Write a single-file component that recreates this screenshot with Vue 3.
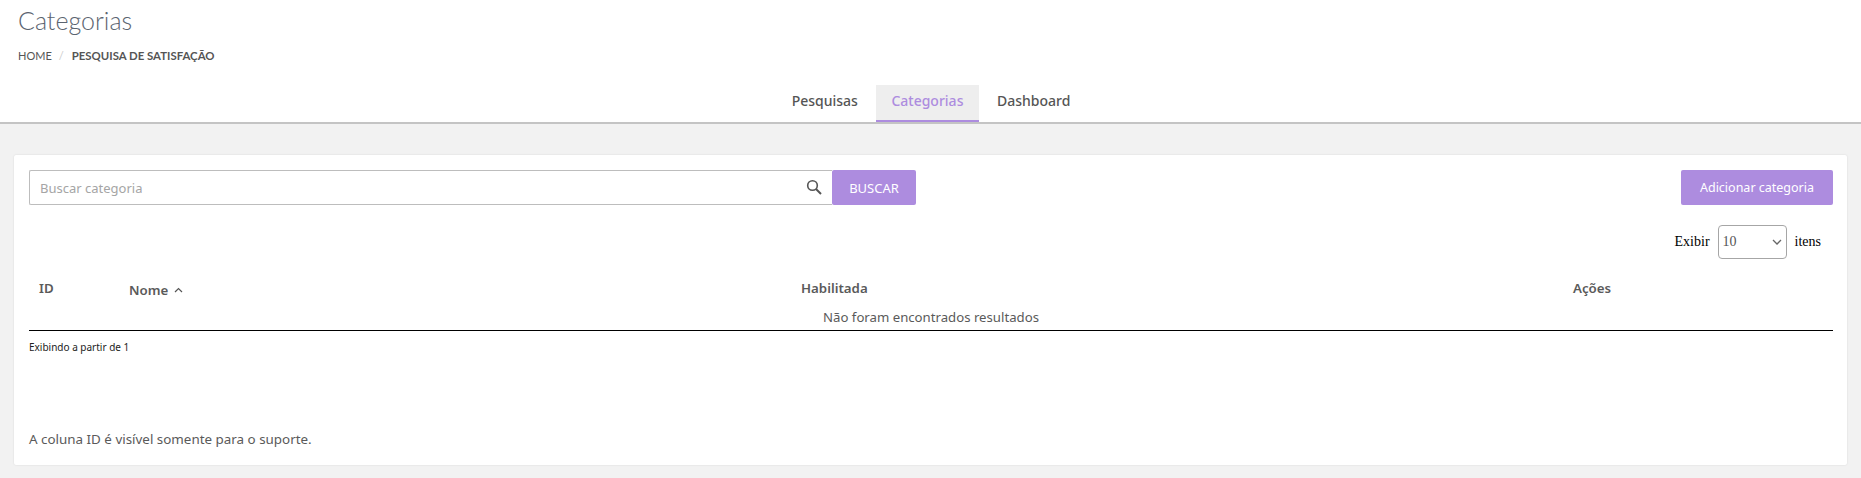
<script setup>
const tabs = [
  { label: 'Pesquisas', active: false },
  { label: 'Categorias', active: true },
  { label: 'Dashboard', active: false }
]
</script>

<template>
  <div class="page">
    <header class="header">
      <h1 class="title">Categorias</h1>
      <nav class="crumbs">
        <span>HOME</span>
        <span class="sep">/</span>
        <strong>PESQUISA DE SATISFAÇÃO</strong>
      </nav>
      <div class="tabs">
        <a v-for="tab in tabs" :key="tab.label" class="tab" :class="{ active: tab.active }">{{ tab.label }}</a>
      </div>
    </header>

    <main class="card">
      <div class="toolbar">
        <div class="search">
          <div class="search-box">
            <span class="placeholder">Buscar categoria</span>
            <svg class="search-icon" width="16" height="16" viewBox="0 0 16 16" fill="none">
              <circle cx="6.5" cy="6.5" r="4.8" stroke="#555" stroke-width="1.6" />
              <path d="M10 10l5 5" stroke="#555" stroke-width="2" />
            </svg>
          </div>
          <button class="btn btn-search">BUSCAR</button>
        </div>
        <button class="btn btn-add">Adicionar categoria</button>
      </div>

      <div class="page-size">
        <span>Exibir</span>
        <div class="select">
          <span>10</span>
          <svg width="10" height="6" viewBox="0 0 10 6" fill="none">
            <path d="M1 1l4 4 4-4" stroke="#666" stroke-width="1.3" />
          </svg>
        </div>
        <span>itens</span>
      </div>

      <div class="table">
        <div class="head">
          <span class="th th-id">ID</span>
          <span class="th th-name">
            Nome
            <svg width="9" height="6" viewBox="0 0 9 6" fill="none">
              <path d="M1 5l3.5-3.5L8 5" stroke="#555" stroke-width="1.2" />
            </svg>
          </span>
          <span class="th">Habilitada</span>
          <span class="th">Ações</span>
        </div>
        <div class="empty">Não foram encontrados resultados</div>
      </div>
      <div class="showing">Exibindo a partir de 1</div>
      <p class="note">A coluna ID é visível somente para o suporte.</p>
    </main>
  </div>
</template>

<style>
html, body { margin: 0; background: #f2f2f2; }
</style>

<style scoped>
.page {
  height: 478px;
  background: #f2f2f2;
  font-family: "Noto Sans", "Open Sans", sans-serif;
  color: #5a5a5a;
  overflow: hidden;
}
.header {
  height: 124px;
  box-sizing: border-box;
  background: #fff;
  border-bottom: 2px solid #c4c4c4;
  padding: 5px 18px 0;
  display: flex;
  flex-direction: column;
}
.title {
  margin: 0;
  font: 300 25px/30px Lato, sans-serif;
  color: #5b6470;
}
.crumbs {
  margin-top: 13px;
  font: 400 11px/16px Lato, sans-serif;
  color: #555;
  display: flex;
}
.crumbs .sep { margin: 0 8px 0 7px; color: #ccc; }
.crumbs strong { font-size: 11.4px; font-weight: 700; color: #555; }
.tabs {
  display: flex;
  justify-content: center;
  gap: 2px;
  margin-top: auto;
  margin-left: -18px;
  margin-right: -18px;
  padding-left: 1px;
}
.tab {
  height: 37px;
  padding: 0 16px;
  font-size: 14px;
  font-weight: 500;
  line-height: 31px;
  box-sizing: border-box;
  color: #555;
}
.tab.active {
  background: #eee;
  color: #ad8cdf;
  border-bottom: 2px solid #ad8cdf;
  padding: 0 15.5px;
}
.card {
  margin: 31px 14px 0;
  height: 310px;
  box-sizing: border-box;
  background: #fff;
  box-shadow: 0 0 2px rgba(0, 0, 0, .12);
  border-radius: 2px;
  padding: 15px 14px 0 15px;
  display: flex;
  flex-direction: column;
}
.toolbar {
  display: flex;
  justify-content: space-between;
}
.search { display: flex; }
.search-box {
  width: 803px;
  height: 35px;
  box-sizing: border-box;
  border: 1px solid #bdbdbd;
  border-right: 0;
  border-radius: 2px 0 0 2px;
  display: flex;
  align-items: center;
  justify-content: space-between;
  padding: 0 10px 0 10px;
  font-size: 13px;
  color: #a5a5a5;
}
.search-icon { margin-top: -1px; }
.btn {
  height: 35px;
  border: 0;
  background: #ad8cdf;
  color: #fff;
  font-family: inherit;
  font-size: 12.5px;
  border-radius: 2px;
  padding: 0;
}
.btn-search { width: 84px; font-size: 13px; }
.btn-add { width: 152px; }
.page-size {
  margin-top: 20px;
  display: flex;
  justify-content: flex-end;
  align-items: center;
  padding-right: 12px;
  height: 34px;
  font: 14px "Liberation Serif", serif;
  color: #000;
}
.select {
  width: 69px;
  height: 34px;
  box-sizing: border-box;
  margin: 0 8px;
  border: 1px solid #a6a6a6;
  border-radius: 4px;
  display: flex;
  align-items: center;
  justify-content: space-between;
  padding: 0 4px 0 4px;
  color: #555;
}
.table { margin-top: 11px; border-bottom: 1px solid #000; }
.head {
  display: grid;
  grid-template-columns: 100px 672px 772px 1fr;
  height: 36px;
  align-items: center;
  font-size: 13.3px;
  font-weight: 600;
}
.th-id { padding-left: 10px; }
.th-name { display: flex; align-items: center; gap: 6px; padding-top: 4px; }
.empty {
  height: 24px;
  text-align: center;
  font-size: 13.2px;
  line-height: 22px;
}
.showing {
  margin-top: 9px;
  font-size: 10px;
  line-height: 14px;
  color: #222;
}
.note {
  margin: auto 0 16px;
  font-size: 13.4px;
  line-height: 20px;
}
</style>
